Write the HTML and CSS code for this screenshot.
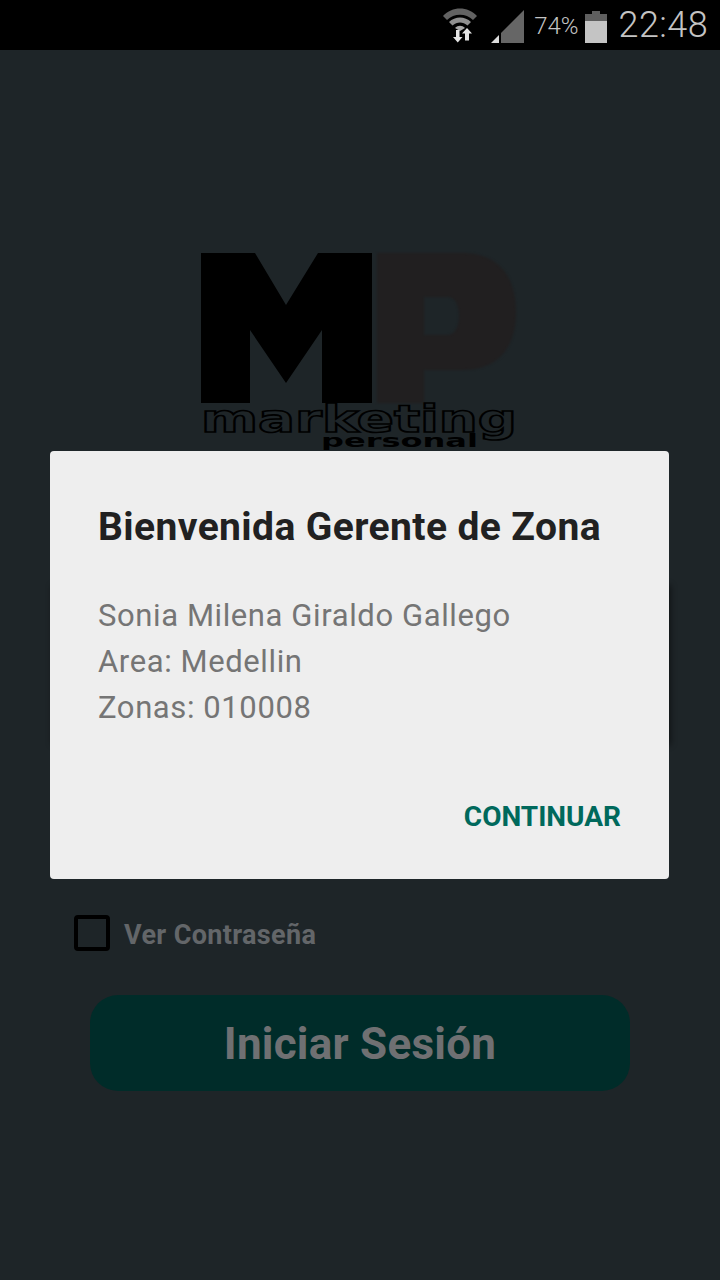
FILE: index.html
```html
<!DOCTYPE html>
<html lang="es">
<head>
<meta charset="utf-8">
<title>Marketing Personal</title>
<link rel="stylesheet" href="styles.css">
</head>
<body>
<div class="screen">
  <header class="statusbar">
    <svg class="ic-wifi" width="38" height="44" viewBox="0 0 38 44">
      <path d="M2 13 C11 3 27 3 36 13 L32 17 C25 10 13 10 6 17Z" fill="#626262"/>
      <path d="M8 19 C14 13 24 13 30 19 L26.500 22.500 C22 18.500 16 18.500 11.500 22.500Z" fill="#8f8f8f"/>
      <path d="M14 25 C17 22 21 22 24 25 L19 28Z" fill="#a8a8a8"/>
      <path d="M15 27h3.500v7h3l-4.750 5.500-4.750-5.500h3z" fill="#e4e4e4"/>
      <path d="M26 25l5 5.500h-3v7h-4v-7h-3z" fill="#e4e4e4"/>
    </svg>
    <svg class="ic-signal" width="34" height="34" viewBox="0 0 34 34">
      <path d="M33 0V33H10V23Z" fill="#666"/>
      <path d="M8 25V33H0Z" fill="#dcdcdc"/>
    </svg>
    <span class="battery-text">74%</span>
    <svg class="ic-battery" width="22" height="32" viewBox="0 0 22 32">
      <path d="M7 0h8v3h7v7H0V3h7z" fill="#5f5f5f"/>
      <rect y="10" width="22" height="22" fill="#c4c4c4"/>
    </svg>
    <span class="clock">22:48</span>
  </header>

  <main class="content">
    <svg class="logo" width="320" height="200" viewBox="0 0 320 200">
      <path class="logo-p" d="M177 3H262C298 3 316 26 316 62 316 98 298 120 262 120H224V153H177ZM224 47V85H248C255 85 259 76 259 66 259 55 255 47 248 47Z"/>
      <path d="M1 3H55L86 55 118 3H172V153H122V80L86 133 50 80V153H1Z" fill="#000"/>
      <text class="logo-word" x="1" y="182" textLength="316" lengthAdjust="spacingAndGlyphs">marketing</text>
      <text class="logo-sub" x="121" y="197" textLength="157" lengthAdjust="spacingAndGlyphs">personal</text>
    </svg>

    <div class="form-card"></div>

    <label class="show-password">
      <span class="checkbox"></span>
      <span class="show-label">Ver Contraseña</span>
    </label>

    <button class="login" type="button">Iniciar Sesión</button>
  </main>

  <div class="dialog" role="dialog">
    <h1 class="dialog-title">Bienvenida Gerente de Zona</h1>
    <div class="dialog-body">
      <p>Sonia Milena Giraldo Gallego</p>
      <p>Area: Medellin</p>
      <p>Zonas: 010008</p>
    </div>
    <div class="dialog-actions">
      <span class="dialog-action">CONTINUAR</span>
    </div>
  </div>
</div>
</body>
</html>
```
FILE: styles.css
```css
* { box-sizing: border-box; }

html, body {
  margin: 0;
  padding: 0;
}

body {
  font-family: Roboto, "Liberation Sans", sans-serif;
  background: #1e2528;
}

.screen {
  position: relative;
  width: 720px;
  height: 1280px;
  overflow: hidden;
  background: #1e2528;
  display: flex;
  flex-direction: column;
}

.statusbar {
  height: 50px;
  flex: none;
  background: #000;
  display: flex;
  align-items: center;
  justify-content: flex-end;
  padding-right: 12px;
  color: #c4c4c4;
}

.ic-wifi { margin-right: 12px; margin-top: -1px; }
.ic-signal { margin-right: 9px; margin-top: 4px; }

.battery-text {
  font-size: 24px;
  font-weight: 300;
  margin-right: 6px;
  margin-top: 2px;
}

.ic-battery { margin-right: 12px; margin-top: 3px; }

.clock {
  font-size: 36px;
  font-weight: 300;
  letter-spacing: 0.4px;
}

.content {
  flex: 1;
  display: flex;
  flex-direction: column;
}

.logo {
  display: block;
  margin: 200px 0 0 200px;
}

.logo-p {
  fill: #211f20;
  filter: blur(1px);
}

.logo-word {
  font-family: "DejaVu Sans", sans-serif;
  font-weight: 700;
  font-size: 37px;
  fill: none;
  stroke: #000;
  stroke-width: 1.6px;
}

.logo-sub {
  font-family: "DejaVu Sans", sans-serif;
  font-weight: 700;
  font-size: 17px;
  fill: #000;
}

.form-card {
  width: 619px;
  height: 160px;
  margin: 135px 0 0 50px;
  background: #1e2528;
  box-shadow: 2px 0 6px rgba(0, 0, 0, 0.45);
}

.show-password {
  display: flex;
  align-items: center;
  gap: 14px;
  margin: 170px 0 0 74px;
}

.checkbox {
  width: 36px;
  height: 36px;
  border: 4px solid #000;
  border-radius: 4px;
}

.show-label {
  position: relative;
  top: 2px;
  font-size: 27px;
  font-weight: 700;
  letter-spacing: 0.35px;
  color: #636669;
}

.login {
  width: 540px;
  height: 96px;
  margin: 44px 0 0 90px;
  padding: 2px 0 0;
  border: 0;
  border-radius: 28px;
  background: #002c29;
  color: #6f7072;
  font-family: inherit;
  font-size: 44px;
  font-weight: 700;
  letter-spacing: 0.25px;
}

.dialog {
  position: absolute;
  left: 50px;
  top: 451px;
  width: 619px;
  height: 428px;
  border-radius: 4px;
  background: #eeeeee;
  padding: 51px 48px 0;
}

.dialog-title {
  margin: 0;
  font-size: 39px;
  line-height: 50px;
  font-weight: 700;
  letter-spacing: 0.4px;
  color: #212121;
}

.dialog-body {
  margin-top: 41px;
  font-size: 31px;
  line-height: 46px;
  letter-spacing: 0.6px;
  color: #757575;
}

.dialog-body p { margin: 0; }

.dialog-actions {
  display: flex;
  justify-content: flex-end;
  margin-top: 68px;
}

.dialog-action {
  font-size: 28px;
  line-height: 36px;
  font-weight: 700;
  color: #00695c;
}
```
